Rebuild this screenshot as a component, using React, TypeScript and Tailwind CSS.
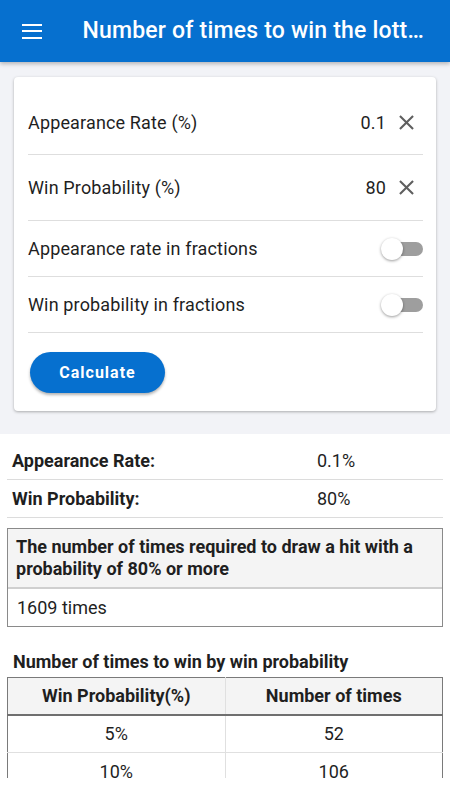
import React from "react";

function CloseIcon() {
  return (
    <svg viewBox="0 0 24 24" className="w-[25px] h-[25px] fill-[#5f5f5f]">
      <path d="M19 6.41L17.59 5 12 10.59 6.41 5 5 6.41 10.59 12 5 17.59 6.41 19 12 13.41 17.59 19 19 17.59 13.41 12z" />
    </svg>
  );
}

function Toggle() {
  return (
    <div className="relative w-[42px] h-[22px]">
      <div className="absolute left-[4px] right-0 top-[4px] h-[14px] rounded-full bg-[#9e9e9e]" />
      <div className="absolute left-0 top-0 w-[22px] h-[22px] rounded-full bg-white shadow-[0_1px_3px_rgba(0,0,0,0.4)]" />
    </div>
  );
}

const rates = [
  { p: "5%", n: "52" },
  { p: "10%", n: "106" },
  { p: "15%", n: "163" },
];

export default function App() {
  return (
    <div className="w-[450px] h-[800px] flex flex-col overflow-hidden bg-white text-[#1f1f1f] font-['Roboto',sans-serif]">
      <header className="relative z-10 h-[62px] shrink-0 flex items-center bg-[#0670cf] shadow-[0_2px_4px_rgba(0,0,0,0.25)]">
        <div className="ml-[22px] flex flex-col gap-[4.5px] w-[21px]">
          <span className="block h-[2px] bg-white" />
          <span className="block h-[2px] bg-white" />
          <span className="block h-[2px] bg-white" />
        </div>
        <h1 className="ml-[40px] mr-[20px] truncate text-white text-[23px] font-medium tracking-[0.2px]">
          Number of times to win the lottery
        </h1>
      </header>

      <main className="flex-1 overflow-hidden">
        <section className="bg-[#f2f3f7] px-[14px] pt-[15px] pb-[23px]">
          <div className="bg-white rounded-[4px] shadow-[0_1px_3px_rgba(0,0,0,0.3)] pl-[14px] pr-[13px] pt-[13px] pb-[18px] text-[18px] tracking-[0.15px]">
            <div className="h-[65px] flex items-center border-b border-[#dedede]">
              <span className="flex-1">Appearance Rate (%)</span>
              <span>0.1</span>
              <span className="ml-[8px] mr-[4px] flex"><CloseIcon /></span>
            </div>
            <div className="h-[66px] flex items-center border-b border-[#dedede]">
              <span className="flex-1">Win Probability (%)</span>
              <span>80</span>
              <span className="ml-[8px] mr-[4px] flex"><CloseIcon /></span>
            </div>
            <div className="h-[56px] flex items-center border-b border-[#dedede]">
              <span className="flex-1">Appearance rate in fractions</span>
              <Toggle />
            </div>
            <div className="h-[56px] flex items-center border-b border-[#dedede]">
              <span className="flex-1">Win probability in fractions</span>
              <Toggle />
            </div>
            <button className="mt-[19px] ml-[2px] h-[41px] w-[135px] rounded-full bg-[#0670cf] text-white text-[16px] font-bold tracking-[1px] shadow-[0_2px_3px_rgba(0,0,0,0.3)]">
              Calculate
            </button>
          </div>
        </section>

        <section className="px-[7px] pt-[8px] text-[18px]">
          <div className="flex items-center h-[38px] border-b border-[#dcdcdc]">
            <span className="pl-[5px] w-[310px] font-bold">Appearance Rate:</span>
            <span>0.1%</span>
          </div>
          <div className="flex items-center h-[38px] border-b border-[#dcdcdc]">
            <span className="pl-[5px] w-[310px] font-bold">Win Probability:</span>
            <span>80%</span>
          </div>

          <div className="mt-[10px] border border-[#8a8a8a]">
            <div className="bg-[#f4f4f4] px-[8px] pt-[7px] pb-[7px] border-b-2 border-[#cfcfcf] font-bold leading-[22px]">
              The number of times required to draw a hit with a probability of 80% or more
            </div>
            <div className="h-[37px] flex items-center px-[9px]">1609 times</div>
          </div>

          <h2 className="mt-[24px] pl-[6px] font-bold leading-[22px]">
            Number of times to win by win probability
          </h2>
          <table className="mt-[4px] w-full border-collapse border border-[#7a7a7a]">
            <thead>
              <tr className="bg-[#f4f4f4] h-[37px] border-b-2 border-[#6f6f6f]">
                <th className="w-1/2 font-bold border-r border-[#e0e0e0]">Win Probability(%)</th>
                <th className="font-bold">Number of times</th>
              </tr>
            </thead>
            <tbody>
              {rates.map((r) => (
                <tr key={r.p} className="h-[38px] border-b border-[#e0e0e0]">
                  <td className="text-center border-r border-[#e0e0e0]">{r.p}</td>
                  <td className="text-center">{r.n}</td>
                </tr>
              ))}
            </tbody>
          </table>
        </section>
      </main>
      <div className="h-[22px] shrink-0 bg-white" />
    </div>
  );
}
